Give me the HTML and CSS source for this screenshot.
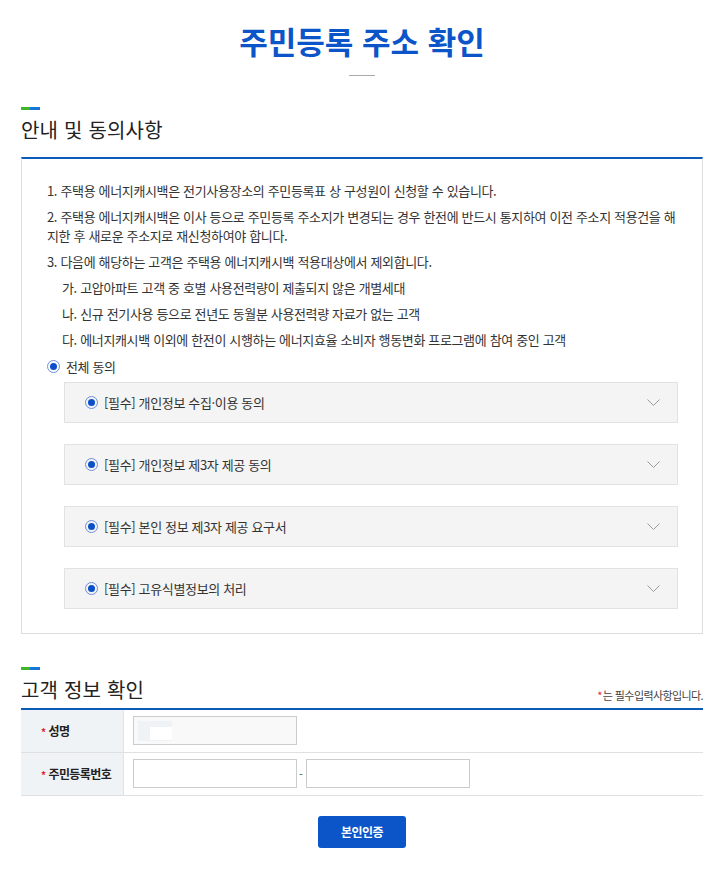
FILE: index.html
```html
<!DOCTYPE html>
<html lang="ko">
	<head>
		<meta charset="UTF-8" />
		<meta name="viewport" content="width=device-width" />
		<title>주민등록 주소 확인</title>
		<link rel="stylesheet" href="styles.css">
	</head>
	<body>
		<div class="wrap">
			<h1 class="page-title">주민등록 주소 확인</h1>
			<div class="title-line"></div>

			<div class="sec-head">
				<span class="sec-bar"></span>
				<h2>안내 및 동의사항</h2>
			</div>
			<div class="agree-box">
				<ol class="notice">
					<li>1. 주택용 에너지캐시백은 전기사용장소의 주민등록표 상 구성원이 신청할 수 있습니다.</li>
					<li>2. 주택용 에너지캐시백은 이사 등으로 주민등록 주소지가 변경되는 경우 한전에 반드시 통지하여 이전 주소지 적용건을 해지한 후 새로운 주소지로 재신청하여야 합니다.</li>
					<li>3. 다음에 해당하는 고객은 주택용 에너지캐시백 적용대상에서 제외합니다.</li>
					<li class="sub">가. 고압아파트 고객 중 호별 사용전력량이 제출되지 않은 개별세대</li>
					<li class="sub">나. 신규 전기사용 등으로 전년도 동월분 사용전력량 자료가 없는 고객</li>
					<li class="sub">다. 에너지캐시백 이외에 한전이 시행하는 에너지효율 소비자 행동변화 프로그램에 참여 중인 고객</li>
				</ol>
				<label class="radio all"><span class="dot"></span>전체 동의</label>
				<div class="acc-list">
					<div class="acc-item">
						<label class="radio"><span class="dot"></span>[필수] 개인정보 수집·이용 동의</label>
						<svg class="chev" width="13" height="7" viewBox="0 0 13 7"><polyline points="0.5,0.5 6.5,6.5 12.5,0.5" fill="none" stroke="#9a9a9a" stroke-width="1"/></svg>
					</div>
					<div class="acc-item">
						<label class="radio"><span class="dot"></span>[필수] 개인정보 제3자 제공 동의</label>
						<svg class="chev" width="13" height="7" viewBox="0 0 13 7"><polyline points="0.5,0.5 6.5,6.5 12.5,0.5" fill="none" stroke="#9a9a9a" stroke-width="1"/></svg>
					</div>
					<div class="acc-item">
						<label class="radio"><span class="dot"></span>[필수] 본인 정보 제3자 제공 요구서</label>
						<svg class="chev" width="13" height="7" viewBox="0 0 13 7"><polyline points="0.5,0.5 6.5,6.5 12.5,0.5" fill="none" stroke="#9a9a9a" stroke-width="1"/></svg>
					</div>
					<div class="acc-item">
						<label class="radio"><span class="dot"></span>[필수] 고유식별정보의 처리</label>
						<svg class="chev" width="13" height="7" viewBox="0 0 13 7"><polyline points="0.5,0.5 6.5,6.5 12.5,0.5" fill="none" stroke="#9a9a9a" stroke-width="1"/></svg>
					</div>
				</div>
			</div>

			<div class="sec-head sec2">
				<span class="sec-bar"></span>
				<div class="sec-row">
					<h2>고객 정보 확인</h2>
					<p class="req-note"><span class="star">*</span>는 필수입력사항입니다.</p>
				</div>
			</div>
			<table class="info-table">
				<tr>
					<th><span class="star">*</span>성명</th>
					<td>
						<div class="inp readonly"><span class="mask"><span class="mask-in"></span></span></div>
					</td>
				</tr>
				<tr>
					<th><span class="star">*</span>주민등록번호</th>
					<td>
						<div class="jumin">
							<input type="text" class="inp">
							<span class="dash">-</span>
							<input type="password" class="inp">
						</div>
					</td>
				</tr>
			</table>

			<div class="btn-area">
				<button type="button" class="btn-auth">본인인증</button>
			</div>
		</div>
	</body>
</html>
```

FILE: styles.css
```css
* {
	box-sizing: border-box;
}
body {
	margin: 0;
	font-family: "Noto Sans CJK KR", "Noto Sans", sans-serif;
	color: #333;
	background: #fff;
}

.wrap {
	margin: 0 22px 0 21px;
	padding-top: 18px;
	padding-bottom: 28px;
}

.page-title {
	margin: 0;
	text-align: center;
	font-size: 31px;
	line-height: 46px;
	font-weight: bold;
	color: #0b55c9;
	letter-spacing: 0;
}
.title-line {
	width: 26px;
	height: 1px;
	background: #aaa;
	margin: 11px auto 0;
}

.sec-head {
	margin-top: 31px;
}
.sec-bar {
	display: block;
	width: 19px;
	height: 3px;
	background: linear-gradient(to right, #3db72a 0 9px, #1677d6 9px 19px);
}
.sec-head h2 {
	margin: 6px 0 0;
	font-size: 20px;
	line-height: 28px;
	font-weight: normal;
	color: #222;
	letter-spacing: 0.2px;
}

.agree-box {
	margin-top: 13px;
	border: 1px solid #ddd;
	border-top: 2px solid #0a5cb8;
	padding: 22px 24px 24px 25px;
}
.notice {
	list-style: none;
	margin: 0;
	padding: 0;
	font-size: 13px;
	line-height: 19px;
	letter-spacing: -0.35px;
	color: #333;
}
.notice li + li {
	margin-top: 7px;
}
.notice li.sub {
	padding-left: 15px;
}

.radio {
	display: flex;
	align-items: center;
	font-size: 13px;
	line-height: 19px;
	letter-spacing: -0.35px;
	color: #333;
}
.radio .dot {
	width: 13px;
	height: 13px;
	border: 1px solid #6f8fd6;
	border-radius: 50%;
	margin-right: 6px;
	flex: none;
	display: flex;
	align-items: center;
	justify-content: center;
}
.radio .dot::after {
	content: "";
	width: 7px;
	height: 7px;
	border-radius: 50%;
	background: #0b4fc9;
}
.radio.all {
	margin-top: 8px;
}

.acc-list {
	margin: 6px 0 0 17px;
	display: flex;
	flex-direction: column;
	gap: 21px;
}
.acc-item {
	height: 41px;
	background: #f4f4f4;
	border: 1px solid #e2e2e2;
	display: flex;
	align-items: center;
	justify-content: space-between;
	padding: 0 17px 0 20px;
}

.sec2 {
	margin-top: 33px;
}
.sec-row {
	display: flex;
	justify-content: space-between;
	align-items: flex-end;
}
.req-note {
	margin: 0 0 1px;
	font-size: 11px;
	line-height: 16px;
	letter-spacing: -0.6px;
	color: #444;
}
.star {
	color: #e0242a;
	margin-right: 1px;
}

.info-table {
	width: 100%;
	margin-top: 4px;
	border-collapse: collapse;
	border-top: 2px solid #0a5cb8;
	font-size: 13px;
}
.info-table th {
	width: 102px;
	background: #f0f3f6;
	border-right: 1px solid #e3e3e3;
	border-bottom: 1px solid #e0e0e0;
	text-align: left;
	padding: 0 0 0 20px;
	font-weight: bold;
	font-size: 12px;
	letter-spacing: -0.6px;
	color: #222;
	height: 43px;
}
.info-table th .star {
	font-size: 10px;
	margin-right: 3px;
}
.info-table td {
	border-bottom: 1px solid #e0e0e0;
	padding: 0 9px;
	height: 43px;
}
.inp {
	display: block;
	width: 164px;
	height: 29px;
	border: 1px solid #ccc;
	background: #fff;
	margin: 0;
	padding: 0 6px;
	font: inherit;
}
.inp.readonly {
	background: #f9f9f9;
	padding: 4px 0 0 4px;
}
.mask {
	display: block;
	width: 34px;
	height: 20px;
	background: #f0f3f6;
	padding: 6px 0 0 12px;
}
.mask-in {
	display: block;
	width: 22px;
	height: 13px;
	background: #fff;
}
.jumin {
	display: flex;
	align-items: center;
}
.dash {
	width: 9px;
	text-align: center;
	font-size: 11px;
	color: #555;
}

.btn-area {
	margin-top: 20px;
	display: flex;
	justify-content: center;
}
.btn-auth {
	width: 88px;
	height: 32px;
	border: 0;
	border-radius: 3px;
	background: #0b55c9;
	color: #fff;
	font-family: inherit;
	font-size: 12px;
	font-weight: bold;
	letter-spacing: -0.5px;
	cursor: pointer;
}
```
